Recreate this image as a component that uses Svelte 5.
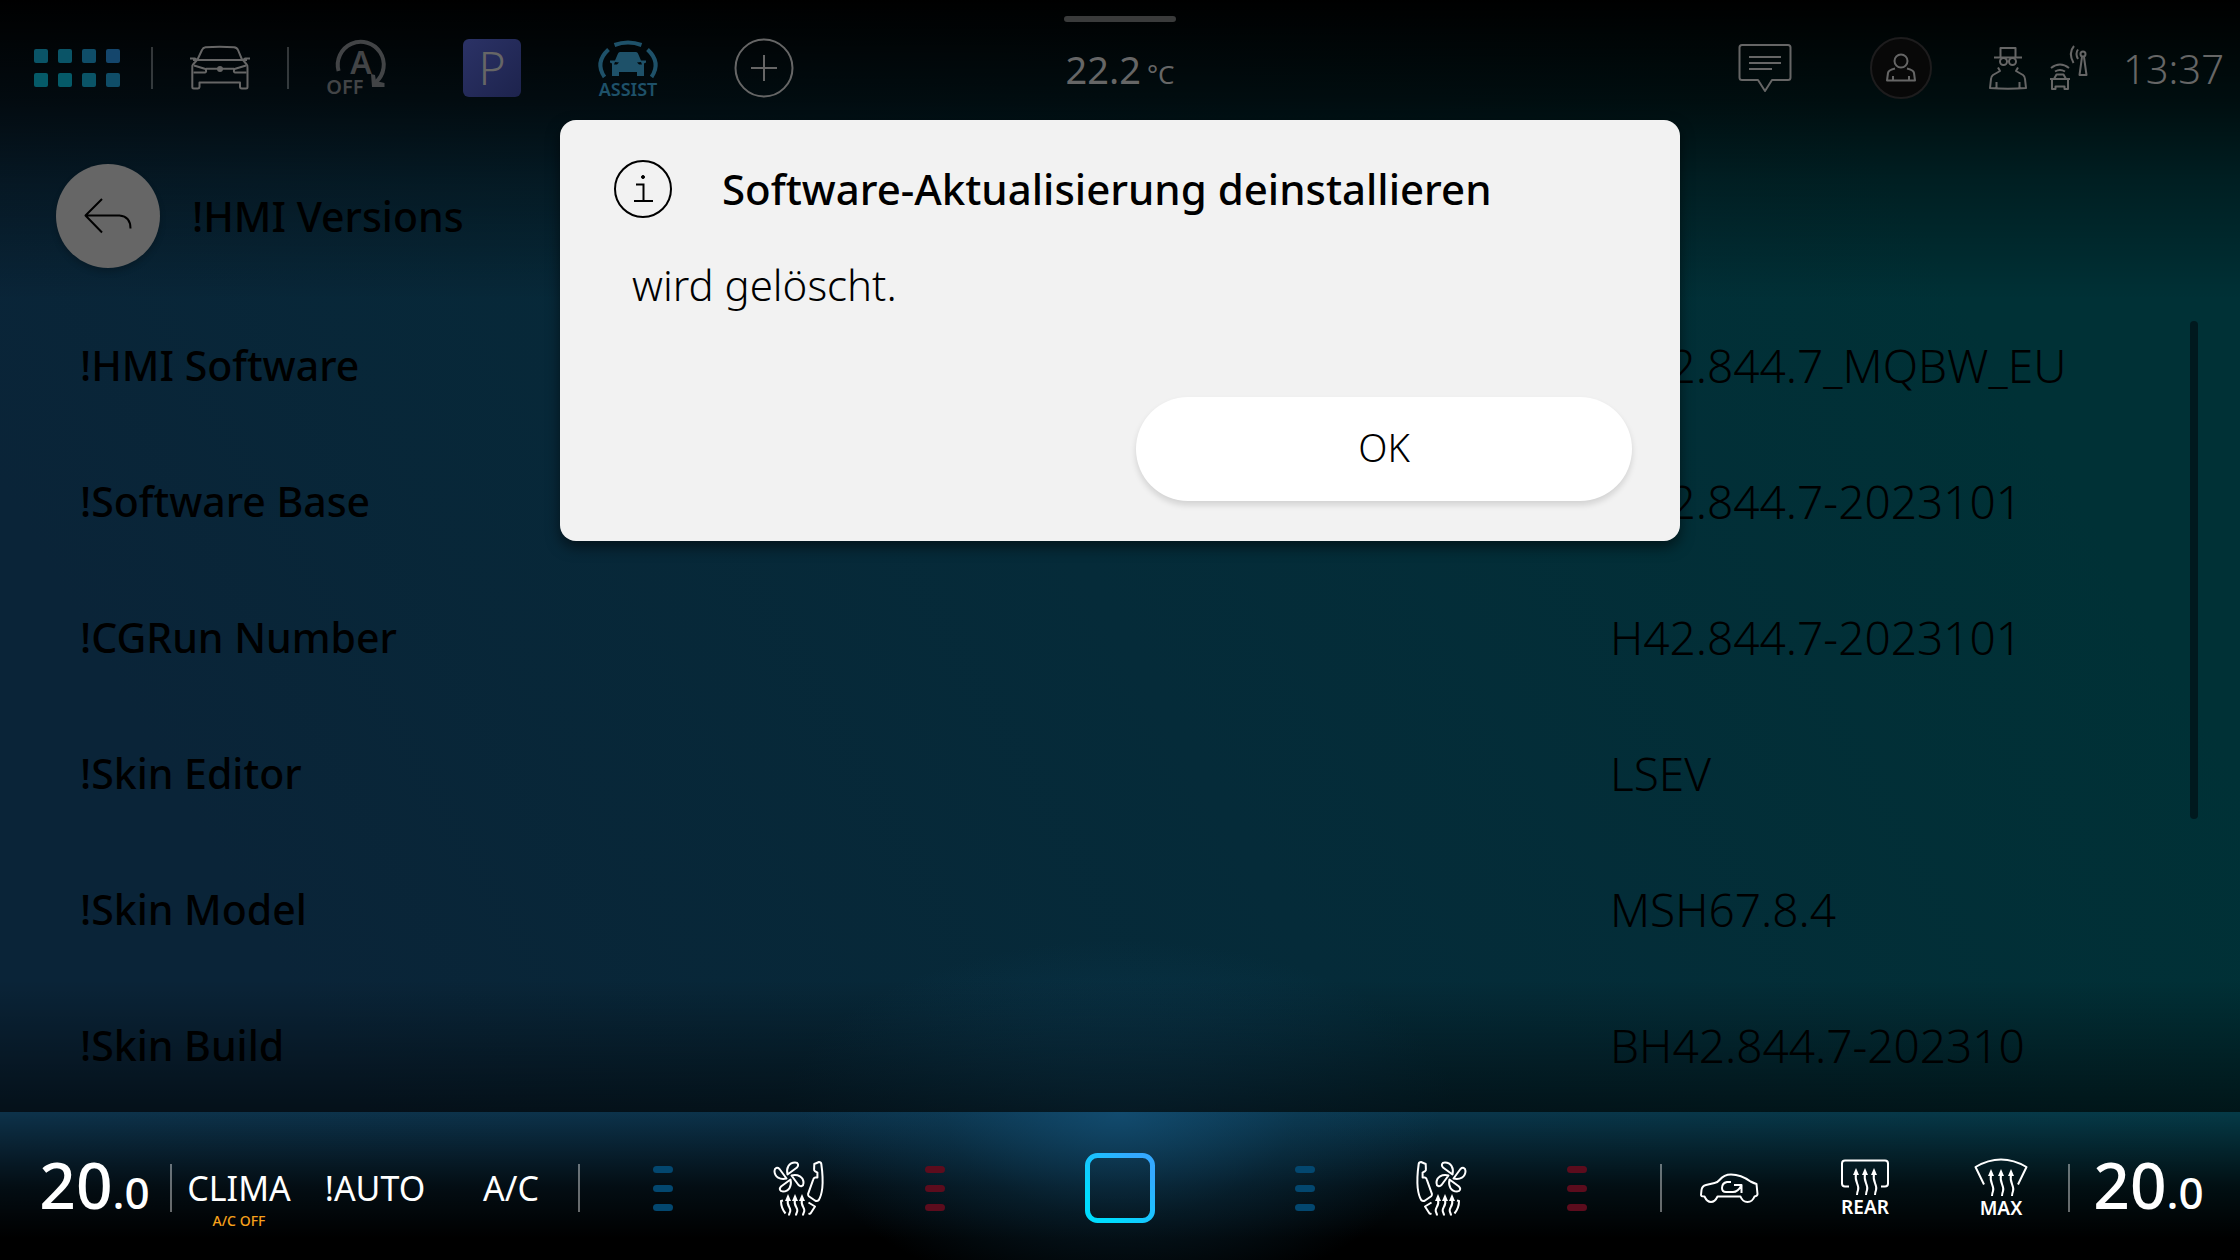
<script>
  const versions = [
    { label: '!HMI Software', value: 'H42.844.7_MQBW_EU' },
    { label: '!Software Base', value: 'H42.844.7-2023101' },
    { label: '!CGRun Number', value: 'H42.844.7-2023101' },
    { label: '!Skin Editor', value: 'LSEV' },
    { label: '!Skin Model', value: 'MSH67.8.4' },
    { label: '!Skin Build', value: 'BH42.844.7-202310' },
  ];
  const blades = [0, 90, 180, 270];
  const seatArrows = [14, 21, 28];
</script>

{#snippet arrow(x, y, h)}
  <path class="solid" d="M{x} {y}l3 7h-6z" />
  <path d="M{x} {y + 6}c-2 {h * 0.3} 4 {h * 0.4} 2 {h * 0.6}q-1 {h * 0.1}-1 {h * 0.18}" />
{/snippet}

{#snippet seat(mirrored)}
  <svg class="line" class:mirrored width="50" height="56" viewBox="0 0 50 56">
    {#each blades as angle}
      <path transform="translate(15 17) rotate({angle})" d="M-1.500-2.500C-3-9 0-14.500 6-14.500C9.500-14.500 10-11.500 8-9.500Z" />
    {/each}
    <path d="M40.300 4 45 2q2 0 2.300 2 2 14 1 24-1 8-3.500 12-1.500 1.500-3.500.8l-6.500-4.500q-1-1-.7-2.500l5-14q.5-2 2-2.200h2.300v-5l-2.500-1.500q-1-.5-.8-2z" />
    <path d="M34.500 42.500l6.500 4-4.500 7-2 .5M9 40.500 7 41q0 7 4.500 12.500" />
    {#each seatArrows as x}{@render arrow(x, 34, 20)}{/each}
  </svg>
{/snippet}

{#snippet level(kind)}
  <span class="cell"><span class="level {kind}"><i></i><i></i><i></i></span></span>
{/snippet}

<div class="screen">
  <header>
    <nav class="tools">
      <button class="apps" aria-label="Apps">
        {#each [1, 2, 3, 4, 5, 6, 7, 8] as n}<i class="app a{n}"></i>{/each}
      </button>
      <span class="sep"></span>
      <button class="cell" aria-label="Fahrzeug">
        <svg class="line" width="60" height="44" viewBox="0 0 60 44">
          <path d="M7.500 13.500 12 4q1-2.500 3.500-2.800 14-1 28.500 0 3 .3 4 2.800l4 9.500M3 14h54M0 12.500h5l2 1.500M60 12.500h-5l-2 1.500" />
          <path d="M7 14 3 18.500q-1 1-.7 4V41q0 1.500 1.500 1.500h4q1.500 0 1.700-1.500v-4.500h40.500V41q.2 1.500 1.700 1.500H56q1.500 0 1.500-1.500V22.500q.2-3-.8-4L53 14" />
          <path d="M4 19.500l11.500 3.500q1.500 3-.5 3.500H3.500M56 19.500 44.500 23q-1.500 3 .5 3.500h11.500M16 22.700h28" />
          <circle class="solid" cx="30" cy="23" r="3" />
        </svg>
      </button>
      <span class="sep"></span>
      <button class="cell off" aria-label="Start-Stopp aus">
        <svg width="60" height="54" viewBox="0 0 60 54">
          <path d="M12.600 30A23 23 0 1 1 50 41" fill="none" stroke="currentColor" stroke-width="4" />
          <path d="M45 33l4 1 1 6 8.500 2v4H46z" fill="currentColor" />
          <text x="35" y="33" font-size="32" font-weight="600" text-anchor="middle">A</text>
          <text x="19" y="53" font-size="20" font-weight="600" text-anchor="middle">OFF</text>
        </svg>
      </button>
      <button class="cell"><span class="park">P</span></button>
      <button class="cell assist">
        <svg width="60" height="39" viewBox="0 0 60 39">
          <path d="M16.500 5q13.500-5 27 0M10.500 9.500q-14 13-4 27.500M49.500 9.500q14 13 4 27.500" fill="none" stroke="currentColor" stroke-width="4" />
          <path fill-rule="evenodd" d="M22 12h16q1.500 0 2 1.500l3 7H48v2l-2 1V36h-7v-4H21v4h-7V23.500l-2-1v-2h5l3-7q.5-1.500 2-1.500zM17 22l-1 2.500h3l2-2zM43 22l-4 .5 2 2h3z" fill="currentColor" />
        </svg>
        ASSIST
      </button>
      <button class="cell" aria-label="Hinzufügen">
        <svg class="line" width="60" height="60" viewBox="0 0 60 60"><circle cx="30" cy="30" r="28.500" /><path d="M17 30h26M30 17v26" /></svg>
      </button>
    </nav>

    <div class="outside">22.2<small>°C</small></div>

    <div class="status">
      <button class="cell" aria-label="Nachrichten">
        <svg class="line" width="54" height="50" viewBox="0 0 54 50">
          <path d="M4 2h46q2.500 0 2.500 2.500v30q0 2.500-2.500 2.500H34l-7 11-7-11H4q-2.500 0-2.500-2.500v-30Q1.500 2 4 2zM11 14h32M11 20h32M11 26h23" />
        </svg>
      </button>
      <button class="cell" aria-label="Benutzer">
        <span class="user">
          <svg class="line" width="30" height="30" viewBox="0 0 30 30">
            <circle cx="15" cy="8" r="6.500" />
            <path d="M9 15.500q-6.500 1.500-7 4.500l-1 7.500h28l-1-7.500q-.5-3-7-4.500M7 28v-5M23 28v-5" />
          </svg>
        </span>
      </button>
      <svg class="line private" width="38" height="44" viewBox="0 0 38 44">
        <path d="M5 11.500h28M11.500 11V2h15v9" />
        <circle cx="14.500" cy="15.500" r="3.500" /><circle cx="23.500" cy="15.500" r="3.500" />
        <path d="M9 21.500l2 3.500-7 4q-2 1.500-2 4L1 42q18 1.500 36 0l-1-9q0-2.500-2-4l-7-4 2-3.500M7.500 42v-6M30.500 42v-6" />
      </svg>
      <svg class="line" width="40" height="44" viewBox="0 0 40 44">
        <path d="M2 22q9-7 18 0M6 25.500q5-3 10 0M5 33l2.500-4.500h7L17 33M1 33h20M3 34v9h3.500v-2.500h9V43H19v-9" />
        <circle cx="34" cy="8" r="2.500" /><path d="M33 11l-2.500 18h7L35 11M29 3.500q-3 4 0 9.500M25 0q-6 7-.5 17" />
      </svg>
      <time>13:37</time>
    </div>
    <span class="handle"></span>
  </header>

  <main>
    <div class="heading">
      <button class="back" aria-label="Zurück">
        <svg class="line" width="48" height="36" viewBox="0 0 48 36"><path d="M18 1 1.500 17.500 18 34.500M1.500 17.500h34Q46.500 18.500 46.500 30.500" /></svg>
      </button>
      <h1>!HMI Versions</h1>
    </div>
    <dl>
      {#each versions as { label, value }}
        <div class="row"><dt>{label}</dt><dd>{value}</dd></div>
      {/each}
    </dl>
    <span class="scroll"></span>
  </main>

  <footer>
    <div class="side">
      <button class="temp">20<small>.0</small></button>
      <span class="sep"></span>
      <button class="cell">CLIMA<span class="note">A/C OFF</span></button>
      <button class="cell">!AUTO</button>
      <button class="cell">A/C</button>
      <span class="sep"></span>
      <span class="space"></span>
      {@render level('cold')}
      <button class="cell" aria-label="Sitz links">{@render seat(false)}</button>
      {@render level('hot')}
    </div>
    <button class="home" aria-label="Home">
      <svg width="70" height="70" viewBox="0 0 70 70">
        <defs><linearGradient id="home" x1="0" y1="1" x2="1" y2="0"><stop offset=".2" stop-color="#00dcff" /><stop offset=".85" stop-color="#34a9ff" /></linearGradient></defs>
        <rect x="2.500" y="2.500" width="65" height="65" rx="10" fill="none" stroke="url(#home)" stroke-width="5" />
      </svg>
    </button>
    <div class="side">
      {@render level('cold')}
      <button class="cell" aria-label="Sitz rechts">{@render seat(true)}</button>
      {@render level('hot')}
      <span class="space"></span>
      <span class="sep"></span>
      <button class="cell" aria-label="Umluft">
        <svg class="line" width="58" height="30" viewBox="0 0 58 30">
          <path d="M17.500 23.500h23q2 5.500 7 5.500t7-5.500q3-.5 3-2.500l-1-10q-3-1-6-2.500Q41 1.500 31 1.500q-7 0-11.500 5.500-2 2.500-5 3L6 12q-4 1-4.500 5l-.5 5q0 1.500 3.500 1.500Q7 29 11 29t6.500-5.500z" />
          <path d="M31 9h-4q-5 1-5 6 0 4 4 4h7q5 0 8-6M34 12h7.500v8" />
        </svg>
      </button>
      <button class="cell stack">
        <svg class="line" width="50" height="36" viewBox="0 0 50 36">
          <path d="M9 27.500H5q-3 0-3-3V4.500q0-3 3-3h40q3 0 3 3v20q0 3-3 3h-4" />
          {@render arrow(16, 9, 27)}{@render arrow(25, 9, 27)}{@render arrow(34, 9, 27)}
        </svg>
        REAR
      </button>
      <button class="cell stack">
        <svg class="line" width="54" height="38" viewBox="0 0 54 38">
          <path d="M10 26.500 1.500 9Q27-6 52.500 9L44 26.500" />
          {@render arrow(17, 11, 27)}{@render arrow(27, 11, 27)}{@render arrow(37, 11, 27)}
        </svg>
        MAX
      </button>
      <span class="sep"></span>
      <button class="temp">20<small>.0</small></button>
    </div>
  </footer>

  <div class="dialog" role="dialog" aria-labelledby="dialog-title">
    <div class="title">
      <svg width="58" height="58" viewBox="0 0 58 58" fill="none" stroke="#000" stroke-width="2">
        <circle cx="29" cy="29" r="28" /><path d="M22 24.500h7.500V41M20 41h19" /><circle cx="29" cy="17" r="1.500" fill="#000" stroke-width="1" />
      </svg>
      <h2 id="dialog-title">Software-Aktualisierung deinstallieren</h2>
    </div>
    <p>wird gelöscht.</p>
    <button class="ok">OK</button>
  </div>
</div>

<style>
  :global(body) { margin: 0; background: #000; }
  .screen {
    position: relative;
    display: flex;
    flex-direction: column;
    min-height: 100vh;
    font-family: 'Noto Sans', sans-serif;
    color: #000;
    background:
      linear-gradient(#000 0, #000000b8 100px, #00000060 180px, #0000 300px),
      linear-gradient(#0000 calc(100% - 280px), #0000008c calc(100% - 148px)),
      radial-gradient(340px 180px at 50% calc(100% - 140px), #124a6a80, #0000),
      linear-gradient(60deg, #0a2438 15%, #052b39 50%, #003136 85%);
  }
  button { padding: 0; border: 0; background: none; font: inherit; color: inherit; }
  svg { display: block; flex: none; overflow: visible; }
  svg text { fill: currentColor; }
  .line { fill: none; stroke: currentColor; stroke-width: 2; stroke-linejoin: round; }
  .line .solid { fill: currentColor; stroke: none; }
  .mirrored { transform: scaleX(-1); }
  .cell { position: relative; display: flex; align-items: center; justify-content: center; flex: none; width: 136px; }
  .sep { flex: none; width: 2px; margin: 0 -1px; background: #fff; }

  header { position: relative; display: grid; grid-template-columns: 1fr auto 1fr; height: 136px; color: #666; }
  .tools, .status { display: flex; align-items: center; }
  header .sep { height: 42px; opacity: .2; }
  .apps { display: grid; grid-template-columns: repeat(4, 14px); gap: 10px; padding: 0 32px 0 34px; }
  .app { height: 14px; border-radius: 2px; background: #0a5467; }
  .a3, .a8 { background: #0f4d68; }
  .a4 { background: #14466c; }
  .a5, .a6 { background: #055a68; }
  .off { color: #424446; }
  .park {
    width: 58px; height: 58px; border-radius: 6px;
    background: linear-gradient(135deg, #2b3266, #1d234d);
    font-size: 46px; line-height: 56px; font-weight: 300;
  }
  .assist { flex-direction: column; padding-top: 2px; color: #1e5169; font-size: 18px; line-height: 20px; font-weight: 600; }
  .outside { align-self: center; font-size: 38px; line-height: 48px; padding-top: 6px; font-weight: 400; }
  .outside small { margin-left: 6px; font-size: 26px; }
  .status { justify-content: flex-end; padding-right: 16px; }
  .private { margin: 0 22px 0 20px; }
  time { margin-left: 34px; padding-top: 2px; font-size: 40px; line-height: 48px; font-weight: 300; }
  .user {
    display: grid; place-items: center; box-sizing: border-box; width: 62px; height: 62px;
    border: 2px solid #1d1c1d; border-radius: 50%; background: #080808;
  }
  .handle { position: absolute; top: 16px; left: calc(50% - 56px); width: 112px; height: 6px; border-radius: 3px; background: #3a3b3b; }

  main { position: relative; flex: 1; }
  .heading { display: flex; align-items: center; gap: 32px; height: 160px; padding-left: 56px; }
  .back { display: grid; place-items: center; width: 104px; height: 104px; border-radius: 50%; background: #666; box-shadow: 0 4px 6px #0003; }
  h1, h2, dt { margin: 0; font-size: 42px; line-height: 56px; font-weight: 500; }
  h1, dt { font-size: 41px; }
  dl { margin: 0; padding-left: 80px; }
  .row { display: grid; grid-template-columns: 1fr 630px; align-items: center; height: 136px; padding-top: 1px; box-sizing: border-box; }
  dd { margin: 0; font-size: 46px; line-height: 56px; font-weight: 300; }
  .scroll { position: absolute; top: 185px; right: 42px; width: 8px; height: 498px; border-radius: 4px; background: #00191e; }

  footer {
    display: flex; justify-content: space-between; box-sizing: border-box; height: 148px; padding-top: 4px; color: #fff;
    background:
      radial-gradient(320px 190px at 50% 0, #165a84a0, #114a6a48 55%, #0000),
      linear-gradient(#0000, #000b 50%, #000 85%),
      linear-gradient(90deg, #0d324a, #0b334b 50%, #053a47);
  }
  .side { display: flex; align-items: center; font-size: 34px; }
  footer .sep { height: 48px; opacity: .4; }
  .space { width: 16px; }
  .temp { width: 171px; padding-left: 18px; font-size: 64px; line-height: 72px; font-weight: 500; text-align: center; }
  .side:last-child .temp { padding: 0 12px 0 0; }
  .temp small { font-size: 44px; }
  .note { position: absolute; top: 100%; left: 0; width: 100%; font-size: 14px; line-height: 20px; font-weight: 500; text-align: center; color: #f7a11b; }
  .level { display: grid; gap: 12px; }
  .level i { width: 20px; height: 7px; border-radius: 4px; }
  .cold i { background: #03476f; }
  .hot i { background: #5c0c1d; }
  .stack { flex-direction: column; padding-top: 2px; font-size: 19px; line-height: 24px; font-weight: 600; }

  .dialog {
    position: absolute; top: 120px; left: 25%; box-sizing: border-box; width: 50%; padding: 40px 48px;
    border-radius: 16px; background: #f2f2f2; box-shadow: 0 6px 14px #0008;
    display: flex; flex-direction: column;
  }
  .title { display: flex; align-items: center; gap: 50px; padding-left: 6px; }
  .dialog p { margin: 38px 0 84px 24px; font-size: 42px; line-height: 57px; font-weight: 300; }
  .ok { align-self: flex-end; width: 496px; height: 104px; padding-bottom: 4px; border-radius: 52px; background: #fff; box-shadow: 0 4px 6px #0002; font-size: 38px; font-weight: 300; }
</style>
